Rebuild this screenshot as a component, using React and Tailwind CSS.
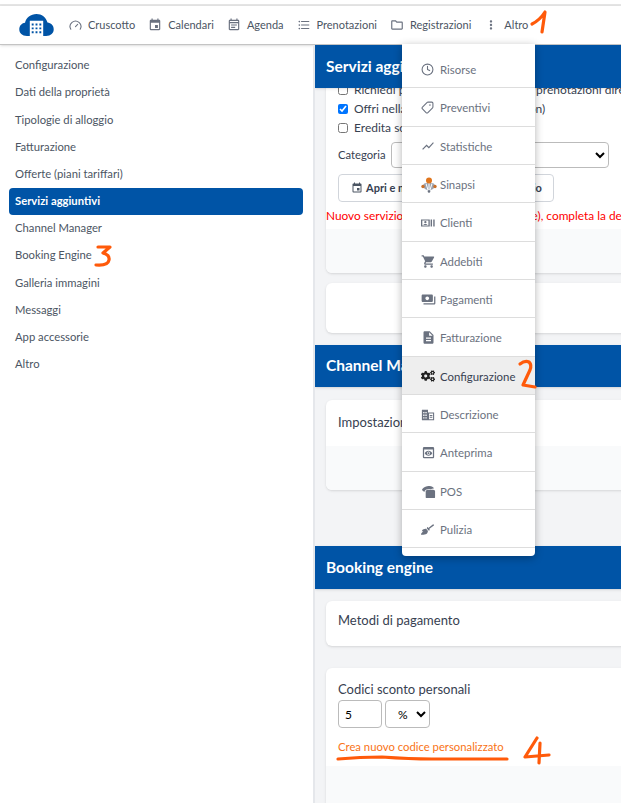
import { Gauge, Clock, Tag } from 'lucide-react';
import {
  MdEvent, MdOutlineEventNote, MdFormatListBulleted, MdOutlineFolder, MdMoreVert,
  MdShowChart, MdShoppingCart, MdPayments, MdDescription, MdPreview,
} from 'react-icons/md';
import { FaCogs, FaBroom } from 'react-icons/fa';

const NAV = [
  { label: 'Cruscotto', icon: <Gauge className="w-[13px] h-[13px]" /> },
  { label: 'Calendari', icon: <MdEvent className="w-[14px] h-[14px]" /> },
  { label: 'Agenda', icon: <MdOutlineEventNote className="w-[14px] h-[14px]" /> },
  { label: 'Prenotazioni', icon: <MdFormatListBulleted className="w-[14px] h-[14px]" /> },
  { label: 'Registrazioni', icon: <MdOutlineFolder className="w-[14px] h-[14px]" /> },
  { label: 'Altro', icon: <MdMoreVert className="w-[14px] h-[14px]" /> },
];

const SIDEBAR = [
  'Configurazione',
  'Dati della proprietà',
  'Tipologie di alloggio',
  'Fatturazione',
  'Offerte (piani tariffari)',
  'Servizi aggiuntivi',
  'Channel Manager',
  'Booking Engine',
  'Galleria immagini',
  'Messaggi',
  'App accessorie',
  'Altro',
];

function SinapsiIcon() {
  return (
    <svg viewBox="0 0 16 16" className="w-[16px] h-[16px]">
      <path d="M1 9 L4 6 H12 L15 9 L12 12 L8 14 L4 12 Z" fill="#9ca3af" />
      <path d="M5 6.500 L7 13 M11 6.500 L9 13 M8 6 V13" stroke="#fff" strokeWidth="1" />
      <circle cx="8" cy="3.500" r="3" fill="#e0751c" />
      <circle cx="2" cy="9.500" r="1.700" fill="#c9702a" />
      <circle cx="14" cy="9.500" r="1.700" fill="#c9702a" />
      <circle cx="8" cy="14.500" r="1.300" fill="#6b7280" />
    </svg>
  );
}

function ClientiIcon() {
  return (
    <svg viewBox="0 0 16 16" className="w-[14px] h-[14px]" fill="#6b7280">
      <path fillRule="evenodd" d="M0 4h10v8H0z M1.500 5.200v5.600h7V5.200z" />
      <circle cx="5" cy="7" r="1.300" />
      <path d="M2.800 10.400c.3-1.500 4.100-1.500 4.400 0z" />
      <rect x="11" y="4" width="1.600" height="8" />
      <rect x="14" y="4" width="1.600" height="8" />
    </svg>
  );
}

function DescrizioneIcon() {
  return (
    <svg viewBox="0 0 16 16" className="w-[14px] h-[14px]" fill="#6b7280">
      <path d="M1 2h7v12H1z" />
      <path fillRule="evenodd" d="M8 5h7v9H8z M9.200 6.200v6.600h4.600V6.200z" />
      <path d="M2.500 4.500h1.500V6H2.500zM5 4.500h1.500V6H5zM2.500 7.500h1.500V9H2.500zM5 7.500h1.500V9H5zM2.500 10.500h1.500V12H2.500zM5 10.500h1.500V12H5z" fill="#fff" />
      <path d="M10 8h3v1h-3zM10 10h3v1h-3z" />
    </svg>
  );
}

function PosIcon() {
  return (
    <svg viewBox="0 0 16 16" className="w-[15px] h-[15px]" fill="#6b7280">
      <path d="M1 6.500C2 3 6 2 9 2c2.500 0 4 1 5 2.500L10 5.500C7 5 4 6 3.500 8.500z" />
      <path d="M5 8c0-1.500 1.200-2 3-2h5c1.200 0 2 .8 2 2v6c0 .6-.4 1-1 1H6c-.6 0-1-.4-1-1z" />
    </svg>
  );
}

const MENU = [
  { label: 'Risorse', icon: <Clock className="w-[13px] h-[13px]" /> },
  { label: 'Preventivi', icon: <Tag className="w-[13px] h-[13px] -scale-x-100" /> },
  { label: 'Statistiche', icon: <MdShowChart className="w-[14px] h-[14px]" /> },
  { label: 'Sinapsi', icon: <SinapsiIcon /> },
  { label: 'Clienti', icon: <ClientiIcon /> },
  { label: 'Addebiti', icon: <MdShoppingCart className="w-[15px] h-[15px]" /> },
  { label: 'Pagamenti', icon: <MdPayments className="w-[15px] h-[15px]" /> },
  { label: 'Fatturazione', icon: <MdDescription className="w-[15px] h-[15px]" /> },
  { label: 'Configurazione', icon: <FaCogs className="w-[14px] h-[14px] text-[#222]" />, active: true },
  { label: 'Descrizione', icon: <DescrizioneIcon /> },
  { label: 'Anteprima', icon: <MdPreview className="w-[15px] h-[15px]" /> },
  { label: 'POS', icon: <PosIcon /> },
  { label: 'Pulizia', icon: <FaBroom className="w-[13px] h-[13px]" /> },
];

function SectionHeader({ children }) {
  return (
    <div className="relative z-10 flex items-center h-full pl-[11px] bg-[#0054a6] text-white text-[15.5px] font-bold shadow-sm">
      {children}
    </div>
  );
}

function Check({ checked, children }) {
  return (
    <label className="flex items-center gap-[6px] h-[19px] whitespace-nowrap">
      <input type="checkbox" defaultChecked={checked} className="w-[10px] h-[10px] m-0" />
      <span>{children}</span>
    </label>
  );
}

export default function App() {
  return (
    <div className="relative w-[621px] h-[803px] overflow-hidden flex flex-col bg-white text-[#374151] text-[12px] font-['Lato',sans-serif]">
      <div className="h-[6px] shrink-0 border-b-2 border-[#e5e5e5]" />

      {/* Top bar */}
      <div className="h-[39px] shrink-0 flex items-center pl-[19px] border-b border-[#c4c4c4] shadow-sm text-[#6b7280]">
        <svg viewBox="0 0 36 23" className="w-[35px] h-[22px] mr-[15px]">
          <path d="M8 23C3 23 0 20 0 16c0-4 3-6.500 6-6.800C7 4 12 0 18 0c5.500 0 10 3.500 11.500 9C33 9.500 36 12 36 16c0 4-3 7-8 7z" fill="#0054a6" />
          <path fillRule="evenodd" d="M11 7h14v16H11z M13 10v2h2v-2z M17 10v2h2v-2z M21 10v2h2v-2z M13 14v2h2v-2z M17 14v2h2v-2z M21 14v2h2v-2z M13 18v2h2v-2z M17 18v2h2v-2z M21 18v2h2v-2z" fill="#fff" />
        </svg>
        <div className="flex items-center gap-[13px]">
          {NAV.map((item) => (
            <div key={item.label} className="flex items-center gap-[6px] whitespace-nowrap">
              {item.icon}
              <span className="text-[11px] text-[#4b5563]">{item.label}</span>
            </div>
          ))}
        </div>
      </div>

      <div className="flex flex-1 min-h-0">
        {/* Sidebar */}
        <div className="w-[315px] shrink-0 border-r-2 border-[#e5e7eb] pt-[7px] pl-[9px] pr-[10px]">
          {SIDEBAR.map((label) => (
            <div
              key={label}
              className={`flex items-center h-[27.2px] px-[6px] rounded text-[11.25px] ${
                label === 'Servizi aggiuntivi' ? 'bg-[#0054a6] text-white font-bold' : 'text-[#4b5563]'
              }`}
            >
              {label}
            </div>
          ))}
        </div>

        {/* Main column */}
        <div className="flex-1 min-w-0 flex flex-col bg-[#f3f4f6] overflow-hidden">
          <div className="h-[43px] shrink-0 -mr-[20px]"><SectionHeader>Servizi aggiuntivi</SectionHeader></div>

          <div className="-mt-[8px] ml-[11px] -mr-[20px] shrink-0 rounded-md bg-white shadow-sm overflow-hidden">
            <div className="pl-[12px] h-[149px]">
              <Check>Richiedi pagamento anticipato per prenotazioni dirette</Check>
              <Check checked>Offri nella ricerca di camere (Station)</Check>
              <Check>Eredita sconti dalla tariffa base</Check>
              <div className="flex items-center gap-[5px] mt-[5px] h-[26px]">
                <span className="text-[11.25px]">Categoria</span>
                <select className="w-[218px] h-[26px] rounded border border-[#bbb] bg-white text-black pl-[8px]">
                  <option>Servizi extra</option>
                </select>
              </div>
              <button className="flex items-center gap-[3px] w-[216px] h-[28px] mt-[6px] pl-[12px] rounded border border-[#d1d5db] text-[11px] font-bold text-[#374151] whitespace-nowrap">
                <MdEvent className="w-[12px] h-[12px] text-[#4b5563] shrink-0" />
                Apri e modifica il calendario servizio
              </button>
              <div className="flex items-center h-[27px] -ml-[12px] text-[#f00] text-[11.85px] whitespace-nowrap">
                Nuovo servizio: scegli la categoria (tariffe), completa la definizione
              </div>
            </div>
            <div className="h-[44px] bg-[#f9fafb]" />
          </div>

          <div className="h-[50px] mt-[10px] ml-[11px] -mr-[20px] shrink-0 rounded-md bg-white shadow-sm" />

          <div className="h-[42px] mt-[12px] shrink-0 -mr-[20px]"><SectionHeader>Channel Manager</SectionHeader></div>

          <div className="mt-[13px] ml-[11px] -mr-[20px] shrink-0 rounded-md bg-white shadow-sm overflow-hidden">
            <div className="h-[46px] flex items-center pl-[12px] text-[13px]">Impostazioni</div>
            <div className="h-[44px] bg-[#f9fafb]" />
          </div>

          <div className="h-[43px] mt-[56px] shrink-0 -mr-[20px]"><SectionHeader>Booking engine</SectionHeader></div>

          <div className="h-[45px] mt-[12px] ml-[11px] -mr-[20px] shrink-0 flex items-center pl-[12px] pb-[5px] rounded-md bg-white shadow-sm text-[13px]">
            Metodi di pagamento
          </div>

          <div className="flex-1 flex flex-col mt-[22px] ml-[11px] -mr-[20px] rounded-t-md bg-white shadow-sm overflow-hidden">
            <div className="h-[98px] shrink-0 pl-[12px] pt-[11px]">
              <div className="text-[13px] leading-[20px]">Codici sconto personali</div>
              <div className="flex gap-[3px] mt-[1px]">
                <input defaultValue="5" className="w-[44px] h-[28px] rounded border border-[#bbb] pl-[6px] text-black" />
                <select className="w-[45px] h-[28px] rounded border border-[#bbb] bg-white pl-[8px] text-black">
                  <option>%</option>
                </select>
              </div>
              <div className="mt-[9px] text-[#f97316] text-[11.3px] leading-[20px]">Crea nuovo codice personalizzato</div>
            </div>
            <div className="flex-1 bg-[#f9fafb]" />
          </div>
        </div>
      </div>

      {/* Dropdown "Altro" */}
      <div className="absolute left-[402px] top-[44px] z-20 w-[133px] h-[512px] pt-[6px] bg-white rounded-b shadow-[0_2px_8px_rgba(0,0,0,0.3)]">
        {MENU.map((item) => (
          <div
            key={item.label}
            className={`flex items-center h-[38.33px] pt-[2px] border-b border-[#dddddd] ${
              item.active ? 'bg-[#eeeeee] text-[#374151]' : 'text-[#6b7280]'
            }`}
          >
            <span className="w-[38px] shrink-0 pl-[19px] flex items-center">{item.icon}</span>
            <span className="whitespace-nowrap text-[11.4px]">{item.label}</span>
          </div>
        ))}
      </div>

      {/* Annotazioni a mano */}
      <svg className="absolute inset-0 z-30 pointer-events-none" width="621" height="803" fill="none" stroke="#ff5a0a" strokeWidth="3.200" strokeLinecap="round" strokeLinejoin="round">
        <path d="M532 24 Q540 20 545 12 L542 32" />
        <path d="M520 364 Q525 360 529 362 Q532 365 530 370 L523 385 L535 387" />
        <path d="M98 247 L110 247 L103 253 Q110 255 109 260 Q108 266 96 265" />
        <path d="M537 738 L525 757 L549 755 M540 743 L539 763" />
        <path d="M338 759 Q360 757 382 757 Q410 759 432 759 L507 759" />
      </svg>
    </div>
  );
}
